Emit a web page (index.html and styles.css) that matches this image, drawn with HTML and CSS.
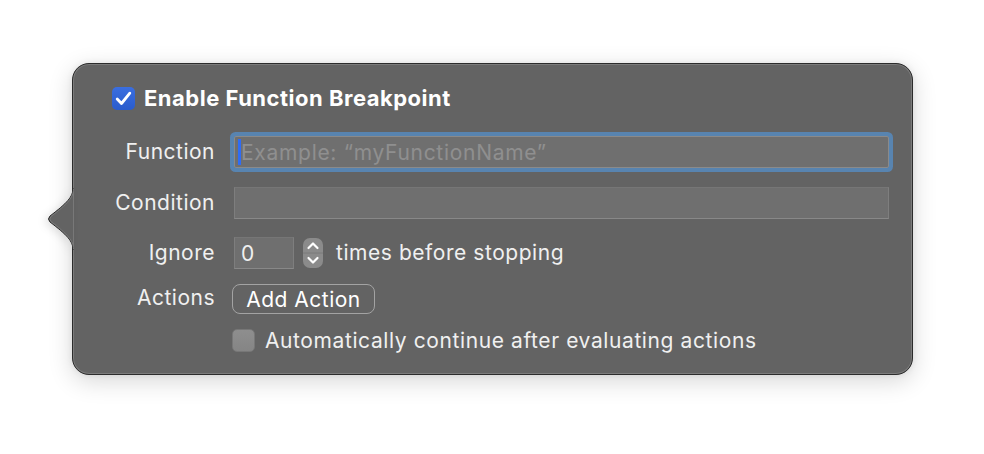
FILE: index.html
```html
<!DOCTYPE html>
<html>
<head>
<meta charset="utf-8">
<link rel="stylesheet" href="styles.css">
</head>
<body>
<div class="popover">
  <svg class="arrow" width="28" height="62" viewBox="0 0 28 62">
    <path d="M27,0 C27,9 21,15 4,28 Q1,31 4,34 C21,47 27,53 27,62 Z" fill="#636363"/>
    <path d="M27,0 C27,9 21,15 4,28 Q1,31 4,34 C21,47 27,53 27,62" fill="none" stroke="#2a2a2a" stroke-width="1"/>
    <path d="M27.5,1 C27.5,9 22,15.5 5,28.5 Q2.5,31 5,33.5 C22,46.5 27.5,53 27.5,61" fill="none" stroke="#7a7a7a" stroke-width="1"/>
  </svg>
  <div class="title-row">
    <span class="check on">
      <svg width="17" height="15" viewBox="0 0 17 15"><path d="M2.2,8 L6.5,12.5 L14.8,2.2" fill="none" stroke="#fff" stroke-width="2.8" stroke-linecap="round" stroke-linejoin="round"/></svg>
    </span>
    <span class="title">Enable Function Breakpoint</span>
  </div>
  <div class="row r1">
    <label class="lbl">Function</label>
    <div class="field focus"><span class="caret"></span><span class="ph">Example: “myFunctionName”</span></div>
  </div>
  <div class="row r2">
    <label class="lbl">Condition</label>
    <div class="field"></div>
  </div>
  <div class="row r3">
    <label class="lbl">Ignore</label>
    <div class="field small"><span class="val">0</span></div>
    <div class="stepper">
      <svg width="20" height="30" viewBox="0 0 20 30">
        <path d="M5.5,10 L10,5.5 L14.5,10" fill="none" stroke="#fff" stroke-width="2.2" stroke-linecap="round" stroke-linejoin="round"/>
        <line x1="0" y1="15" x2="20" y2="15" stroke="#7a7a7a" stroke-width="1"/>
        <path d="M5.5,20 L10,24.5 L14.5,20" fill="none" stroke="#fff" stroke-width="2.2" stroke-linecap="round" stroke-linejoin="round"/>
      </svg>
    </div>
    <span class="text">times before stopping</span>
  </div>
  <div class="row r4">
    <label class="lbl">Actions</label>
    <button class="btn">Add Action</button>
  </div>
  <div class="row r5">
    <span class="lbl"></span>
    <span class="check off"></span>
    <span class="text auto">Automatically continue after evaluating actions</span>
  </div>
</div>
</body>
</html>
```
FILE: styles.css
```css
html, body {
  margin: 0;
  padding: 0;
  background: #ffffff;
  width: 984px;
  height: 454px;
  overflow: hidden;
  font-family: Inter, "Noto Sans", sans-serif;
}

.popover {
  position: relative;
  box-sizing: border-box;
  margin: 63px 0 0 72px;
  width: 841px;
  height: 312px;
  background: #636363;
  border: 1px solid #2c2c2c;
  border-radius: 17px;
  box-shadow: inset 0 0 0 1px #7b7b7b, 0 6px 24px rgba(0,0,0,0.16), 0 0 6px rgba(0,0,0,0.08);
  padding: 22px 22px 0 39px;
  color: #f0f0f0;
}

.arrow {
  position: absolute;
  left: -27px;
  top: 124px;
  filter: drop-shadow(-3px 2px 4px rgba(0,0,0,0.12));
}

.title-row {
  display: flex;
  align-items: center;
  height: 24px;
  gap: 9px;
}

.title {
  font-size: 22px;
  font-weight: 700;
  color: #ffffff;
  letter-spacing: 0.5px;
}

.check {
  box-sizing: border-box;
  width: 23px;
  height: 23px;
  border-radius: 5px;
  display: inline-flex;
  align-items: center;
  justify-content: center;
  flex: none;
}

.check.on {
  background: linear-gradient(#3a6ee0, #2a5ccc);
}

.check.off {
  background: linear-gradient(#8e8e8e, #858585);
  border: 1px solid #777;
}

.row {
  display: flex;
  align-items: center;
  margin-left: -39px;
}

.r1 { margin-top: 26px; height: 32px; }
.r2 { margin-top: 19px; height: 32px; }
.r3 { margin-top: 18px; height: 32px; }
.r4 { margin-top: 15px; height: 30px; }
.r5 { margin-top: 14px; height: 24px; }

.r1 .lbl, .r2 .lbl, .r3 .lbl, .r3 .text { position: relative; top: -1px; }

.lbl {
  width: 142px;
  flex: none;
  text-align: right;
  font-size: 21px;
  letter-spacing: 0.5px;
  color: #f0f0f0;
  margin-right: 19px;
}

.r4 .lbl { margin-right: 17px; position: relative; top: -2px; }
.r5 .lbl { margin-right: 17px; }

.field {
  box-sizing: border-box;
  width: 655px;
  height: 32px;
  background: #6f6f6f;
  border: 1px solid #7e7e7e;
  border-top-color: #767676;
  border-bottom-color: #888;
  display: flex;
  align-items: center;
  font-size: 21px;
  letter-spacing: 0.5px;
}

.field.focus {
  border-color: #8a8a8a;
  box-shadow: 0 0 0 4px #5884b0;
  border-radius: 2px;
  padding-left: 3px;
}

.caret {
  width: 3px;
  height: 26px;
  background: #2f6cf5;
  flex: none;
}

.ph {
  color: #8f8f8f;
  letter-spacing: 0.7px;
}

.field.small {
  width: 60px;
  padding-left: 6px;
  color: #f0f0f0;
}

.stepper {
  width: 20px;
  height: 30px;
  border-radius: 7px;
  background: #8b8b8b;
  margin-left: 9px;
  flex: none;
  display: flex;
}

.text {
  font-size: 21px;
  letter-spacing: 0.55px;
  color: #f0f0f0;
  margin-left: 13px;
}

.text.auto {
  margin-left: 10px;
  letter-spacing: 0.6px;
}

.btn {
  box-sizing: border-box;
  height: 30px;
  width: 143px;
  border: 1.5px solid #a3a3a3;
  border-radius: 8px;
  background: transparent;
  color: #ffffff;
  font-family: Inter, "Noto Sans", sans-serif;
  font-size: 21px;
  letter-spacing: 0.5px;
  padding: 0;
}
```
